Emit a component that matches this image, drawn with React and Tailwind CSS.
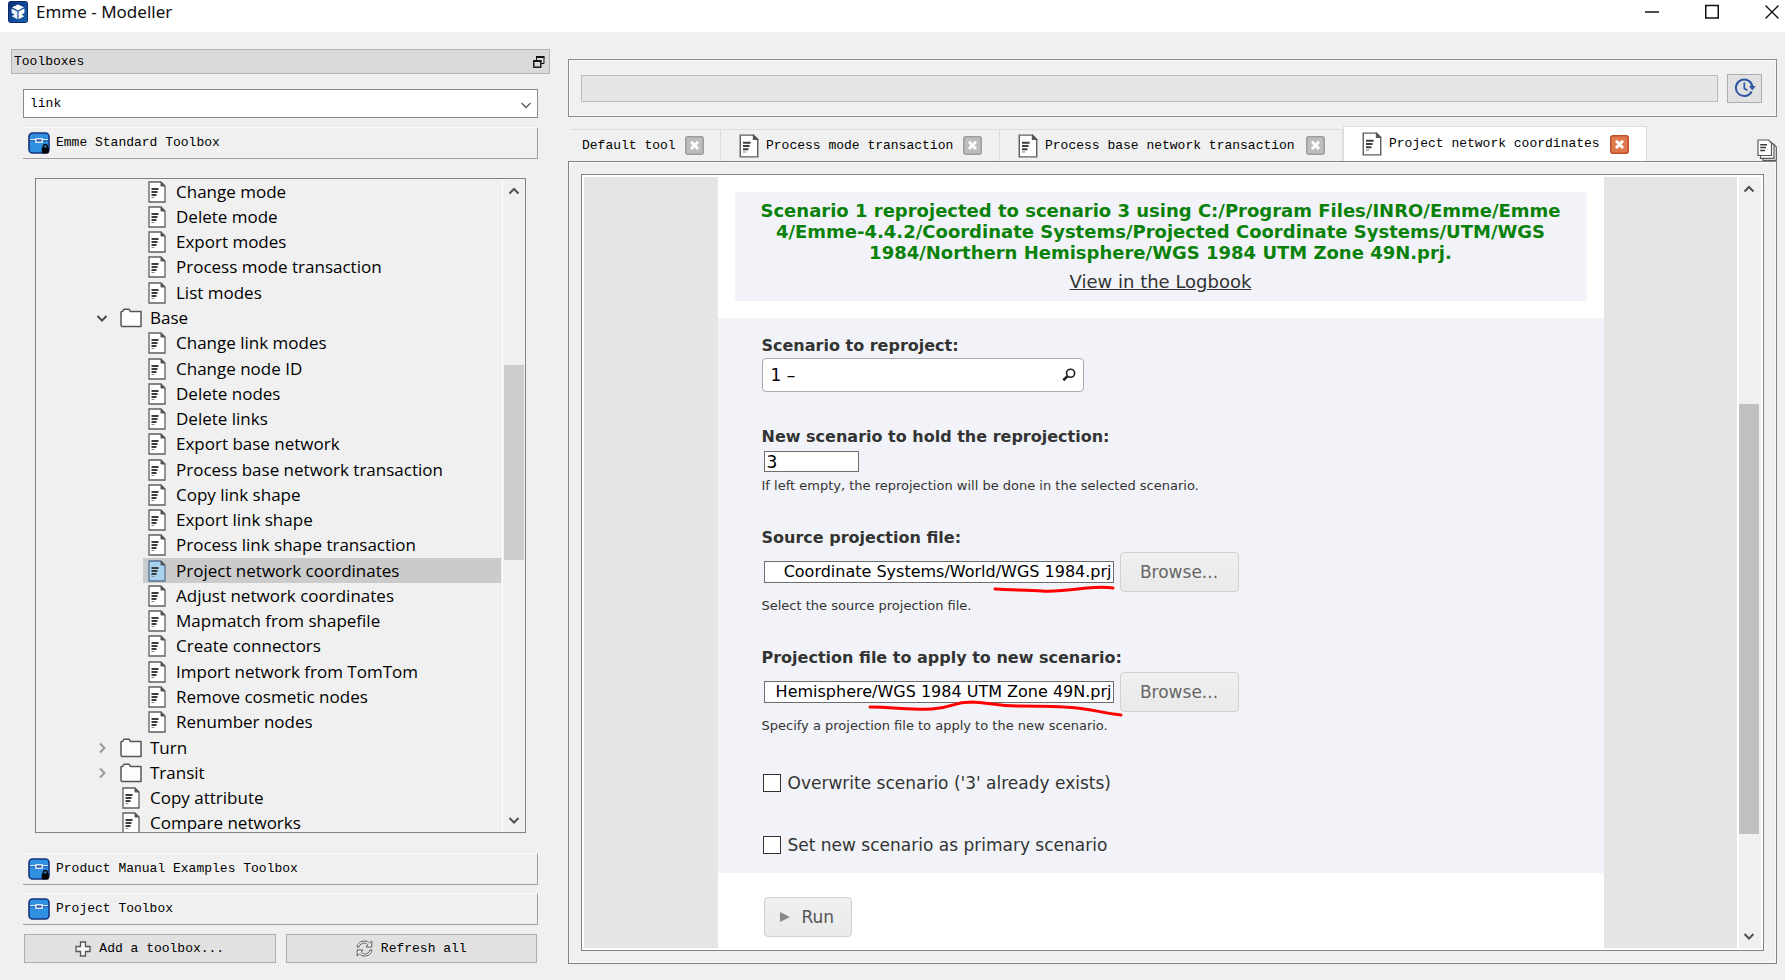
import React from "react";

const mono = "font-['Liberation_Mono',monospace]";
const verdana = "font-['DejaVu_Sans',sans-serif]";

const treeItems = [
  { label: "Change mode", kind: "leaf" },
  { label: "Delete mode", kind: "leaf" },
  { label: "Export modes", kind: "leaf" },
  { label: "Process mode transaction", kind: "leaf" },
  { label: "List modes", kind: "leaf" },
  { label: "Base", kind: "folder", open: true },
  { label: "Change link modes", kind: "leaf" },
  { label: "Change node ID", kind: "leaf" },
  { label: "Delete nodes", kind: "leaf" },
  { label: "Delete links", kind: "leaf" },
  { label: "Export base network", kind: "leaf" },
  { label: "Process base network transaction", kind: "leaf" },
  { label: "Copy link shape", kind: "leaf" },
  { label: "Export link shape", kind: "leaf" },
  { label: "Process link shape transaction", kind: "leaf" },
  { label: "Project network coordinates", kind: "leaf", selected: true },
  { label: "Adjust network coordinates", kind: "leaf" },
  { label: "Mapmatch from shapefile", kind: "leaf" },
  { label: "Create connectors", kind: "leaf" },
  { label: "Import network from TomTom", kind: "leaf" },
  { label: "Remove cosmetic nodes", kind: "leaf" },
  { label: "Renumber nodes", kind: "leaf" },
  { label: "Turn", kind: "folder" },
  { label: "Transit", kind: "folder" },
  { label: "Copy attribute", kind: "tool" },
  { label: "Compare networks", kind: "tool" },
];

function Chevron({ dir, className = "", color = "#505050", width = 2 }) {
  const paths = {
    down: "M1.5 4 L6 8.5 L10.5 4",
    up: "M1.5 8.5 L6 4 L10.5 8.5",
    right: "M4 1.5 L8.5 6 L4 10.5",
  };
  return (
    <svg viewBox="0 0 12 12" className={`h-3 w-3 shrink-0 ${className}`} fill="none" stroke={color} strokeWidth={width} aria-hidden="true">
      <path d={paths[dir]} />
    </svg>
  );
}

function DocIcon({ selected = false, className = "h-[22px] w-[18px]" }) {
  return (
    <svg viewBox="0 0 18 22" className={`shrink-0 ${className}`} fill="none" aria-hidden="true">
      <path d="M1 1 H13 L17 5 V21 H1 Z" fill={selected ? "#a9d1f0" : "#ffffff"} stroke={selected ? "#56728c" : "#5f5f5f"} strokeWidth="1.3" />
      <path d="M13 1 V5 H17 Z" fill="#555" stroke="#555" strokeWidth="1" />
      <path d="M3.5 8 H10.5 M3.5 11 H9.5 M3.5 14 H8.5" stroke="#3c3c3c" strokeWidth="1.8" />
      <path d="M3.5 16.5 H6.5" stroke="#8a8a8a" strokeWidth="1" />
    </svg>
  );
}

function FolderIcon() {
  return (
    <svg viewBox="0 0 22 20" className="h-5 w-[22px] shrink-0" fill="#fdfdfd" stroke="#555" strokeWidth="1.5" aria-hidden="true">
      <path d="M1 17.5 V4 L3 3 L4 1.2 H9 L10.5 3.5 H21 V18.5 H2 Z" strokeLinejoin="round" />
    </svg>
  );
}

function ToolboxIcon({ locked }) {
  return (
    <svg viewBox="0 0 22 22" className="h-[22px] w-[22px] shrink-0" aria-hidden="true">
      <rect x="1" y="1" width="20" height="20" rx="3.5" fill="#2f8fe0" stroke="#14337c" strokeWidth="1.6" />
      <path d="M2 7.6 H20" stroke="#d6eafb" strokeWidth="1.2" />
      <path d="M2 8.8 H20" stroke="#1b57a8" strokeWidth="1" />
      <rect x="7.8" y="6.8" width="6.4" height="3.4" fill="#2456ad" stroke="#ffffff" strokeWidth="1.2" />
      {locked && (
        <g>
          <path d="M15.4 16 V14.6 A1.9 2.2 0 0 1 19.2 14.6 V16" fill="none" stroke="#050505" strokeWidth="1.5" />
          <rect x="13.8" y="15.4" width="7" height="6" rx="0.8" fill="#050505" />
        </g>
      )}
    </svg>
  );
}

function CloseIcon({ active }) {
  return (
    <svg viewBox="0 0 19 19" className="h-[19px] w-[19px]" aria-hidden="true">
      <rect x="0.8" y="0.8" width="17.4" height="17.4" rx="2" fill={active ? "#e07850" : "#bdbdbd"} stroke={active ? "#c04c28" : "#9c9c9c"} strokeWidth="1.5" />
      <path d="M6 5.8 L13 13 M13 5.8 L6 13" stroke="#ffffff" strokeWidth="2.8" />
    </svg>
  );
}

function TitleBar() {
  return (
    <header className="flex h-8 shrink-0 items-start justify-between bg-white">
      <div className="flex items-center gap-2 pl-2">
        <svg viewBox="0 0 20 22" className="h-[22px] w-5" aria-hidden="true">
          <defs>
            <linearGradient id="app-blue" x1="0" y1="0" x2="1" y2="1">
              <stop offset="0" stopColor="#0b2f78" />
              <stop offset="1" stopColor="#1a62b4" />
            </linearGradient>
          </defs>
          <rect x="0.5" y="0.5" width="19" height="21" rx="2" fill="url(#app-blue)" stroke="#0a2c66" />
          <path d="M10 3.4 L16 6.2 L10 9.4 L4 6.2 Z" fill="#ffffff" />
          <path d="M3.6 7.6 L9.4 10.6 V18.2 L3.8 15.2 L6.4 13.4 L3.6 12 Z" fill="#e6f1fc" />
          <path d="M16.4 7.6 L10.6 10.6 V18.2 L16.2 15.2 L13.6 13.4 L16.4 12 Z" fill="#ffffff" />
        </svg>
        <h1 className="text-[17px] leading-6 text-[#111]">Emme - Modeller</h1>
      </div>
      <div className="flex gap-[46px] pt-1 pr-1.5">
        <button type="button" aria-label="Minimize">
          <svg viewBox="0 0 14 16" className="h-4 w-[14px]"><path d="M0 8 H14" stroke="#111" strokeWidth="1.5" /></svg>
        </button>
        <button type="button" aria-label="Maximize">
          <svg viewBox="0 0 14 16" className="h-4 w-[14px]"><rect x="0.75" y="1.5" width="12.5" height="12.5" fill="none" stroke="#111" strokeWidth="1.5" /></svg>
        </button>
        <button type="button" aria-label="Close">
          <svg viewBox="0 0 14 16" className="h-4 w-[14px]"><path d="M0.5 1.5 L13.5 14.5 M13.5 1.5 L0.5 14.5" stroke="#111" strokeWidth="1.4" /></svg>
        </button>
      </div>
    </header>
  );
}

function ToolboxHeader({ label, locked }) {
  return (
    <button type="button" className="flex h-8 w-full shrink-0 items-center gap-1.5 border-t border-r border-b border-t-[#fafafa] border-r-[#a0a0a0] border-b-[#a0a0a0] pl-[5px] text-left">
      <ToolboxIcon locked={locked} />
      <span>{label}</span>
    </button>
  );
}

function TreeRow({ item }) {
  if (item.kind === "leaf") {
    return (
      <li className="flex min-h-0 pl-[107px]">
        <button type="button" className={`flex min-w-0 flex-1 items-center gap-2.5 pl-[5px] text-left ${item.selected ? "bg-[#cbcbcb]" : ""}`}>
          <DocIcon selected={item.selected} />
          <span>{item.label}</span>
        </button>
      </li>
    );
  }
  if (item.kind === "folder") {
    return (
      <li className="flex min-h-0 pl-[60px]">
        <button type="button" aria-expanded={Boolean(item.open)} className="flex flex-1 items-center gap-2 text-left">
          <Chevron dir={item.open ? "down" : "right"} color={item.open ? "#4a4a4a" : "#9a9a9a"} className="mr-1" />
          <FolderIcon />
          <span>{item.label}</span>
        </button>
      </li>
    );
  }
  return (
    <li className="flex min-h-0 pl-[86px]">
      <button type="button" className="flex flex-1 items-center gap-2.5 text-left">
        <DocIcon />
        <span>{item.label}</span>
      </button>
    </li>
  );
}

function Sidebar() {
  return (
    <aside className={`flex w-[539px] shrink-0 flex-col pt-[17px] pb-[17px] text-[13px] text-black ${mono}`}>
      <div className="flex h-[25px] shrink-0 items-center justify-between border border-[#b4b4b4] bg-[#dadada] pr-1 pl-0.5">
        <h2>Toolboxes</h2>
        <button type="button" aria-label="Float panel">
          <svg viewBox="0 0 12 12" className="h-3 w-3" fill="#dadada" stroke="#111">
            <path d="M3.5 1 H11 V7.5 H3.5 Z" strokeWidth="1" />
            <path d="M3 1 H11.5" strokeWidth="2" />
            <rect x="0.8" y="5" width="7" height="6.2" strokeWidth="1.4" />
            <path d="M0.2 5 H8.4" strokeWidth="2" />
          </svg>
        </button>
      </div>

      <div className="flex min-h-0 flex-1 flex-col px-3">
        <div className="relative mt-[15px] shrink-0">
          <select aria-label="Search toolboxes" defaultValue="link" className="block h-[29px] w-full appearance-none border border-[#8a8a8a] bg-white pl-1.5">
            <option value="link">link</option>
          </select>
          <Chevron dir="down" color="#5a5a5a" width={1.3} className="pointer-events-none absolute top-2.5 right-1.5" />
        </div>
        <div className="mt-[9px] flex shrink-0">
          <ToolboxHeader label="Emme Standard Toolbox" locked />
        </div>

        <div className="mx-3 mt-[19px] flex min-h-0 flex-1 overflow-hidden border border-[#808388] font-['Open_Sans',sans-serif] text-[17px]">
          <ul className="grid h-[calc(100%+4px)] min-w-0 flex-1 auto-rows-fr pr-px leading-5">
            {treeItems.map((item) => (
              <TreeRow key={item.label} item={item} />
            ))}
          </ul>
          <div className="flex w-[23px] flex-col items-center border-l border-white bg-[#f0f0f0] py-1.5">
            <Chevron dir="up" />
            <div className="flex min-h-0 w-5 flex-1 flex-col">
              <div className="flex-[168]" />
              <div className="flex-[194] bg-[#cdcdcd]" />
              <div className="flex-[254]" />
            </div>
            <Chevron dir="down" />
          </div>
        </div>

        <div className="mt-5 flex shrink-0 flex-col gap-2">
          <ToolboxHeader label="Product Manual Examples Toolbox" locked />
          <ToolboxHeader label="Project Toolbox" />
        </div>
        <div className="mt-[9px] grid shrink-0 grid-cols-2 gap-2.5 px-px">
          <button type="button" className="flex h-[29px] items-center justify-center gap-2 border border-[#adadad] bg-[#e1e1e1]">
            <svg viewBox="0 0 16 16" className="h-4 w-4" fill="#f5f5f5" stroke="#555" strokeWidth="1.3" aria-hidden="true">
              <path d="M5.5 1 H10.5 V5.5 H15 V10.5 H10.5 V15 H5.5 V10.5 H1 V5.5 H5.5 Z" />
            </svg>
            Add a toolbox...
          </button>
          <button type="button" className="flex h-[29px] items-center justify-center gap-2 border border-[#adadad] bg-[#e1e1e1]">
            <svg viewBox="0 0 17 17" className="h-[17px] w-[17px]" fill="#f2f2f2" stroke="#5a5a5a" strokeWidth="1" aria-hidden="true">
              <path d="M1 7 C1.5 3 5 1 8.5 1 C11 1 12.5 2 13.5 3.2 L15.8 1 V7 H10 L12 4.8 C11 3.6 10 3 8.5 3 C6 3 3.6 4.4 3 7 Z" />
              <path d="M16 10 C15.5 14 12 16 8.5 16 C6 16 4.5 15 3.5 13.8 L1.2 16 V10 H7 L5 12.2 C6 13.4 7 14 8.5 14 C11 14 13.4 12.6 14 10 Z" />
            </svg>
            Refresh all
          </button>
        </div>
      </div>
    </aside>
  );
}

function Tab({ label, icon, active, width }) {
  return (
    <div className={`flex items-center border-t border-r border-[#dcdcdc] ${width} ${active ? "h-[35px] border-l bg-white" : "h-8"} ${icon ? "pr-[17px] pl-[18px]" : "pr-4 pl-3"}`}>
      <button type="button" role="tab" aria-selected={Boolean(active)} className="flex min-w-0 flex-1 items-center gap-[7px] text-left whitespace-nowrap">
        {icon && <DocIcon className="h-6 w-5" />}
        <span>{label}</span>
      </button>
      <button type="button" aria-label={`Close ${label}`}>
        <CloseIcon active={active} />
      </button>
    </div>
  );
}

function FileField({ id, label, value, hint, children }) {
  return (
    <div>
      <label htmlFor={id} className="block text-base leading-5 font-bold">{label}</label>
      <div className="relative mt-1 flex items-center gap-1.5 pl-0.5">
        <input id={id} type="text" defaultValue={value} className="h-[22px] w-[350px] border border-[#6e6e6e] bg-white px-px text-right text-base text-black" />
        <button type="button" className="h-10 w-[119px] rounded border border-[#d0d0d0] bg-linear-to-b from-[#f0f0f0] to-[#e9e9e9] text-[#666]">Browse...</button>
        {children}
      </div>
      <p className="mt-1 text-[13px] leading-5">{hint}</p>
    </div>
  );
}

function ToolPage() {
  return (
    <div className={`w-[77%] max-w-[886px] bg-white text-[17px] leading-5 text-[#333] ${verdana}`}>
      <div className="px-[17px] pt-[15px] pb-[17px]">
        <div className="bg-[#f1f3f8] pt-2 pb-2 text-center text-lg">
          <p className="px-6 leading-[21px] font-bold text-[#0a820a]">
            Scenario 1 reprojected to scenario 3 using C:/Program Files/INRO/Emme/Emme<br />
            4/Emme-4.4.2/Coordinate Systems/Projected Coordinate Systems/UTM/WGS<br />
            1984/Northern Hemisphere/WGS 1984 UTM Zone 49N.prj.
          </p>
          <a href="#logbook" className="mt-2 block leading-[22px] underline">View in the Logbook</a>
        </div>
      </div>

      <form className="bg-[#f1f3f8] pt-[18px] pb-[18px] pl-11" onSubmit={(e) => e.preventDefault()}>
        <label htmlFor="scenario" className="block text-base leading-5 font-bold">Scenario to reproject:</label>
        <div className="relative mt-0.5 w-[322px]">
          <input id="scenario" type="text" defaultValue="1 –" className="h-[34px] w-full rounded border border-[#a9a9b0] bg-white px-2 text-black" />
          <svg viewBox="0 0 16 16" className="absolute top-2.5 right-2 h-[14px] w-[14px]" fill="none" stroke="#222" aria-hidden="true">
            <circle cx="9.8" cy="6" r="4.6" strokeWidth="1.9" />
            <path d="M6.3 9.3 L1.5 14" strokeWidth="3" />
          </svg>
        </div>

        <div className="mt-[35px]">
          <label htmlFor="new-scenario" className="block text-base leading-5 font-bold">New scenario to hold the reprojection:</label>
          <div className="mt-1 pl-0.5">
            <input id="new-scenario" type="text" defaultValue="3" className="block h-[21px] w-[95px] border border-[#6e6e6e] bg-white px-0.5 text-black" />
          </div>
          <p className="mt-1 text-[13px] leading-5">If left empty, the reprojection will be done in the selected scenario.</p>
        </div>

        <div className="mt-8">
          <FileField id="source-file" label="Source projection file:" value="Coordinate Systems/World/WGS 1984.prj" hint="Select the source projection file.">
            <svg viewBox="0 0 124 12" className="pointer-events-none absolute top-[31px] left-[230px] h-3 w-[124px]" fill="none" stroke="#f00" strokeWidth="3" strokeLinecap="round" aria-hidden="true">
              <path d="M3 6 C20 7 35 7 50 8 S85 6 95 5 S115 4 121 5" />
            </svg>
          </FileField>
        </div>

        <div className="mt-8">
          <FileField id="target-file" label="Projection file to apply to new scenario:" value="Hemisphere/WGS 1984 UTM Zone 49N.prj" hint="Specify a projection file to apply to the new scenario.">
            <svg viewBox="0 0 256 18" className="pointer-events-none absolute top-[27px] left-[105px] h-[18px] w-64" fill="none" stroke="#f00" strokeWidth="3" strokeLinecap="round" aria-hidden="true">
              <path d="M3 8 C25 8 45 11 65 10 S85 3 105 3 C125 4 130 7 150 7 C175 7 190 7 210 9 S235 14 254 16" />
            </svg>
          </FileField>
        </div>

        <div className="mt-[37px] flex flex-col items-start gap-[42px]">
          <label className="flex items-center gap-[7px]">
            <input type="checkbox" className="m-0 ml-px h-[18px] w-[18px] appearance-none border border-[#333] bg-white" />
            Overwrite scenario ('3' already exists)
          </label>
          <label className="flex items-center gap-[7px]">
            <input type="checkbox" className="m-0 ml-px h-[18px] w-[18px] appearance-none border border-[#333] bg-white" />
            Set new scenario as primary scenario
          </label>
        </div>
      </form>

      <div className="px-[46px] pt-6">
        <button type="button" className="flex h-10 w-[88px] items-center gap-3 rounded border border-[#d0d0d0] bg-linear-to-b from-[#f0f0f0] to-[#e9e9e9] pl-[15px] text-[#555]">
          <svg viewBox="0 0 10 10" className="h-2.5 w-2.5 shrink-0" fill="#888" aria-hidden="true"><path d="M0 0 L10 5 L0 10 Z" /></svg>
          Run
        </button>
      </div>
    </div>
  );
}

function MainArea() {
  return (
    <main className="flex min-w-0 flex-1 flex-col pt-[27px] pb-4">
      <div className="flex h-[58px] shrink-0 items-center gap-[9px] border border-[#8c8c8c] pr-3.5 pl-3 shadow-[inset_0_0_0_1px_#fafafa]">
        <div role="progressbar" aria-label="Progress" className="h-[27px] flex-1 border border-[#bcbcbc] bg-[#e6e6e6]" />
        <button type="button" aria-label="History" className="flex h-[29px] w-[35px] items-center justify-center border border-[#adadad] bg-[#e1e1e1]">
          <svg viewBox="0 0 22 20" className="h-5 w-[22px]" fill="none" stroke="#2f56a3" strokeWidth="2">
            <path d="M17.6 13.5 A8.3 8.3 0 1 1 18.4 8.5" />
            <path d="M15 8 H21.6 L18.3 12.4 Z" fill="#2f56a3" stroke="none" />
            <path d="M10.3 4.5 V10.5 L13.5 12.2" strokeWidth="1.7" />
          </svg>
        </button>
      </div>

      <div className={`mt-[9px] flex h-[35px] shrink-0 items-end justify-between pl-0.5 text-[13px] text-black ${mono}`}>
        <div role="tablist" className="flex items-end">
          <Tab label="Default tool" width="w-[151px]" />
          <Tab label="Process mode transaction" icon width="w-[279px]" />
          <Tab label="Process base network transaction" icon width="w-[343px]" />
          <Tab label="Project network coordinates" icon active width="w-[304px]" />
        </div>
        <button type="button" aria-label="All tabs">
          <svg viewBox="0 0 20 22" className="h-[22px] w-5" fill="#fff" stroke="#5a5a5a" strokeWidth="1.2">
            <path d="M6 5 H16.5 L19.3 8 V21.4 H6 Z" />
            <path d="M3.5 3 H14 L17 6 V19.4 H3.5 Z" />
            <path d="M1 1 H11.5 L14.5 4 V16.5 H1 Z" />
            <path d="M3.2 5.8 H10 M3.2 8.6 H9 M3.2 11.4 H8" stroke="#3c3c3c" strokeWidth="1.5" />
          </svg>
        </button>
      </div>

      <div className="flex min-h-0 flex-1 border border-[#808388] p-3 shadow-[inset_0_0_0_1px_#fafafa]">
        <div className="flex min-h-0 min-w-0 flex-1 overflow-hidden border border-[#808388] bg-white p-0.5">
          <div className="flex min-w-0 flex-1 justify-center bg-[#e5e5e5]">
            <ToolPage />
          </div>
          <div className="flex w-6 flex-col items-center border-l-2 border-white bg-[#f0f0f0] py-1.5 pr-0.5">
            <Chevron dir="up" />
            <div className="flex min-h-0 w-5 flex-1 flex-col">
              <div className="flex-[209]" />
              <div className="flex-[430] bg-[#c0c0c0]" />
              <div className="flex-[96]" />
            </div>
            <Chevron dir="down" />
          </div>
        </div>
      </div>
    </main>
  );
}

export default function App() {
  return (
    <div className="flex h-screen min-h-[720px] flex-col bg-[#f0f0f0] font-['Noto_Sans',sans-serif]">
      <TitleBar />
      <div className="flex min-h-0 flex-1 gap-[18px] pr-2 pl-[11px]">
        <Sidebar />
        <MainArea />
      </div>
    </div>
  );
}
